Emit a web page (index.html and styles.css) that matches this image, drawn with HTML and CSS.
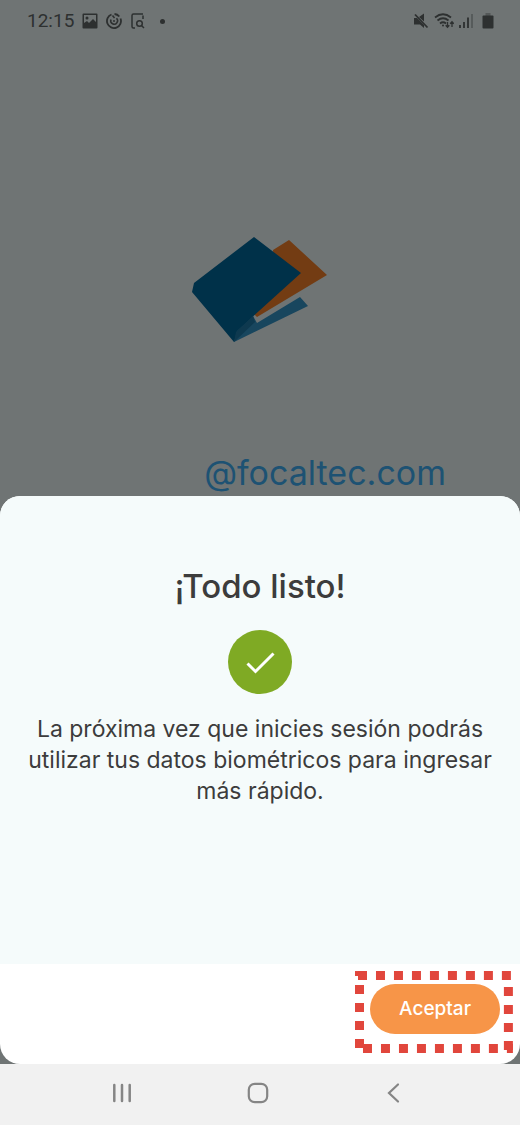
FILE: index.html
```
<!DOCTYPE html>
<html lang="es">
  <head>
    <meta charset="UTF-8" />
    <meta name="viewport" content="width=device-width, initial-scale=1.0" />
    <title>¡Todo listo!</title>
    <link rel="stylesheet" href="styles.css">
  </head>
  <body>
    <header class="status-bar">
      <div class="status-group">
        <span class="time">12:15</span>
        <svg width="16" height="16" viewBox="0 0 16 16">
          <path fill="currentColor" fill-rule="evenodd" d="M1.5 0.5h13a1 1 0 0 1 1 1v13a1 1 0 0 1-1 1h-13a1 1 0 0 1-1-1v-13a1 1 0 0 1 1-1zM2 2v8l3-2 2 2 4-4 3 3V2zM5 3.5a1.5 1.5 0 1 1 0 3a1.5 1.5 0 0 1 0-3z" />
        </svg>
        <svg width="16" height="16" viewBox="0 0 16 16" fill="none" stroke="currentColor" stroke-width="1.8">
          <path d="M5.5 1.500A7 7 0 1 0 14.500 5.500M8.500 1a7 7 0 0 1 4.800 2.500" />
          <path d="M5 6.500a3.400 3.400 0 1 0 5.500-1.200M6.500 2.500l2 2.500" stroke-width="1.500" />
          <circle cx="8" cy="8" r="1" fill="currentColor" stroke="none" />
        </svg>
        <svg width="16" height="16" viewBox="0 0 16 16" fill="none" stroke="currentColor" stroke-width="1.5">
          <path d="M5 15H3.500A1.500 1.500 0 0 1 2 13.500v-11A1.500 1.500 0 0 1 3.500 1H13M13 2.500V6" />
          <circle cx="9.500" cy="10.500" r="2.800" />
          <path d="M11.500 12.500l2.500 2.500" />
        </svg>
        <span class="dot"></span>
      </div>
      <div class="status-group status-right">
        <svg width="16" height="16" viewBox="0 0 16 16">
          <path fill="currentColor" d="M1 5h3l7 7v3L7 11.500H1zM6 4l5-3.500v8z" />
          <path stroke="currentColor" stroke-width="1.8" d="M2 1.500l12.500 13" />
        </svg>
        <svg width="20" height="16" viewBox="0 0 20 16" fill="none" stroke="currentColor" stroke-width="1.8">
          <path d="M1 4.500q8-6.500 16 0M3.500 7.500q5.500-4.500 11 0M6 10.500q3-2.500 6 0" />
          <circle cx="9" cy="12.500" r="1" fill="currentColor" stroke="none" />
          <path stroke-width="1.3" d="M13.500 9v5M11.700 12.200l1.800 2 1.800-2M18 14V9M16.200 10.800l1.800-2 1.800 2" />
        </svg>
        <svg width="14" height="16" viewBox="0 0 14 16" stroke="currentColor" stroke-width="1.8">
          <path d="M1 15v-3M5 15V9M9 15V4.500" />
          <path opacity="0.4" d="M13 15V1" />
        </svg>
        <svg class="battery" width="12" height="16" viewBox="0 0 12 16" fill="currentColor">
          <path opacity="0.4" d="M3.500 0h5v3h-5z" />
          <rect x="0.5" y="2.500" width="11" height="13" rx="1" />
        </svg>
      </div>
    </header>

    <main class="login">
      <svg class="logo" width="136" height="106" viewBox="0 0 136 106">
        <path fill="#733c13" d="M97 3l38 35-70 42-3-3 20-50-1-14z" />
        <path fill="#18465e" d="M42 105l-1-12 20-14 4 7 43-26 8 9z" />
        <path fill="#003149" d="M62 0l47 36-64 58-3 11L0 55l2-9z" />
        <path fill="#0e394f" d="M42 105l2-10 17-16 2 6z" />
      </svg>
      <p class="account">@focaltec.com</p>
    </main>

    <section class="sheet" role="dialog" aria-labelledby="sheet-title">
      <div class="sheet-body">
        <h1 id="sheet-title">¡Todo listo!</h1>
        <svg class="check" width="64" height="64" viewBox="0 0 64 64">
          <circle cx="32" cy="32" r="32" fill="#7faa24" />
          <path d="M19.500 33.500l8 8L45.500 23.500" fill="none" stroke="#fff" stroke-width="3" />
        </svg>
        <p class="message">La próxima vez que inicies sesión podrás utilizar tus datos biométricos para ingresar más rápido.</p>
      </div>
      <div class="sheet-footer">
        <div class="highlight">
          <button type="button" class="accept">Aceptar</button>
          <svg class="highlight-frame" viewBox="0 0 158 82" fill="none" stroke="#e1463c" stroke-width="9" stroke-dasharray="9 9">
            <path d="M3 4.500H158" />
            <path d="M4.500 14V78" />
            <path d="M8 77.500H158" />
            <path d="M153.500 16V82" />
            <path stroke-dasharray="none" stroke-width="5" d="M0 2.500h10" />
          </svg>
        </div>
      </div>
    </section>

    <nav class="nav-bar">
      <button type="button" aria-label="Recientes">
        <svg width="24" height="24" viewBox="0 0 24 24" fill="none" stroke="currentColor" stroke-width="2.500" stroke-linecap="round">
          <path d="M4.300 4v16M12 4v16M19.700 4v16" />
        </svg>
      </button>
      <button type="button" aria-label="Inicio">
        <svg width="24" height="24" viewBox="0 0 24 24" fill="none" stroke="currentColor" stroke-width="2.200">
          <rect x="2.800" y="2.800" width="18.400" height="18.400" rx="6" />
        </svg>
      </button>
      <button type="button" aria-label="Atrás">
        <svg width="24" height="24" viewBox="0 0 24 24" fill="none" stroke="currentColor" stroke-width="2.200" stroke-linecap="round">
          <path d="M17 3.500L8 12l9 8.500" />
        </svg>
      </button>
    </nav>
  </body>
</html>
```
FILE: styles.css
```
* {
  box-sizing: border-box;
}

body {
  display: flex;
  flex-direction: column;
  min-height: 100vh;
  margin: 0;
  background-color: #6f7474;
  color: #3c3c3c;
  font-family: Inter, 'Open Sans', sans-serif;
}

h1,
p {
  margin: 0;
}

svg {
  display: block;
}

button {
  border: none;
  font-family: inherit;
  cursor: pointer;
}

.status-bar {
  display: flex;
  justify-content: space-between;
  padding: 10px 26px 10px 27px;
  color: #2d3030;
}

.status-group {
  display: flex;
  align-items: center;
  gap: 8px;
}

.status-right {
  gap: 5px;
}

.battery {
  margin-left: 4px;
}

.time {
  font-family: Roboto, sans-serif;
  font-size: 19px;
  line-height: 22px;
}

.dot {
  width: 5px;
  height: 5px;
  margin-left: 6px;
  border-radius: 50%;
  background-color: currentColor;
}

.login {
  display: flex;
  flex: 1;
  flex-direction: column;
  align-items: center;
  justify-content: flex-end;
}

.account {
  align-self: flex-end;
  margin-top: 110px;
  padding: 0 74px 3px 0;
  color: #1d5273;
  font-size: 34px;
  line-height: 40px;
}

.sheet {
  overflow: hidden;
  border-radius: 20px;
  background-color: #fff;
}

.sheet-body {
  display: flex;
  flex-direction: column;
  align-items: center;
  padding: 70px 20px 157px;
  background-color: #f5fbfb;
  text-align: center;
}

h1 {
  font-size: 33px;
  font-weight: 500;
  line-height: 40px;
}

.check {
  margin: 24px 0 20px;
}

.message {
  font-size: 23px;
  line-height: 31px;
}

.sheet-footer {
  display: flex;
  justify-content: flex-end;
  padding: 7px 7px 11px;
}

.highlight {
  position: relative;
  padding: 13px 13px 19px 15px;
}

.highlight-frame {
  position: absolute;
  inset: 0;
  width: 100%;
  height: 100%;
  pointer-events: none;
}

.accept {
  display: block;
  padding: 13px 29px;
  border-radius: 25px;
  background-color: #f79548;
  color: #fff;
  font-size: 19px;
  font-weight: 500;
  line-height: 24px;
}

.nav-bar {
  display: flex;
  justify-content: space-between;
  padding: 16px 115px 19px 110px;
  background-color: #f1f1f1;
}

.nav-bar button {
  padding: 1px 0;
  background-color: transparent;
  color: #858585;
}
```
